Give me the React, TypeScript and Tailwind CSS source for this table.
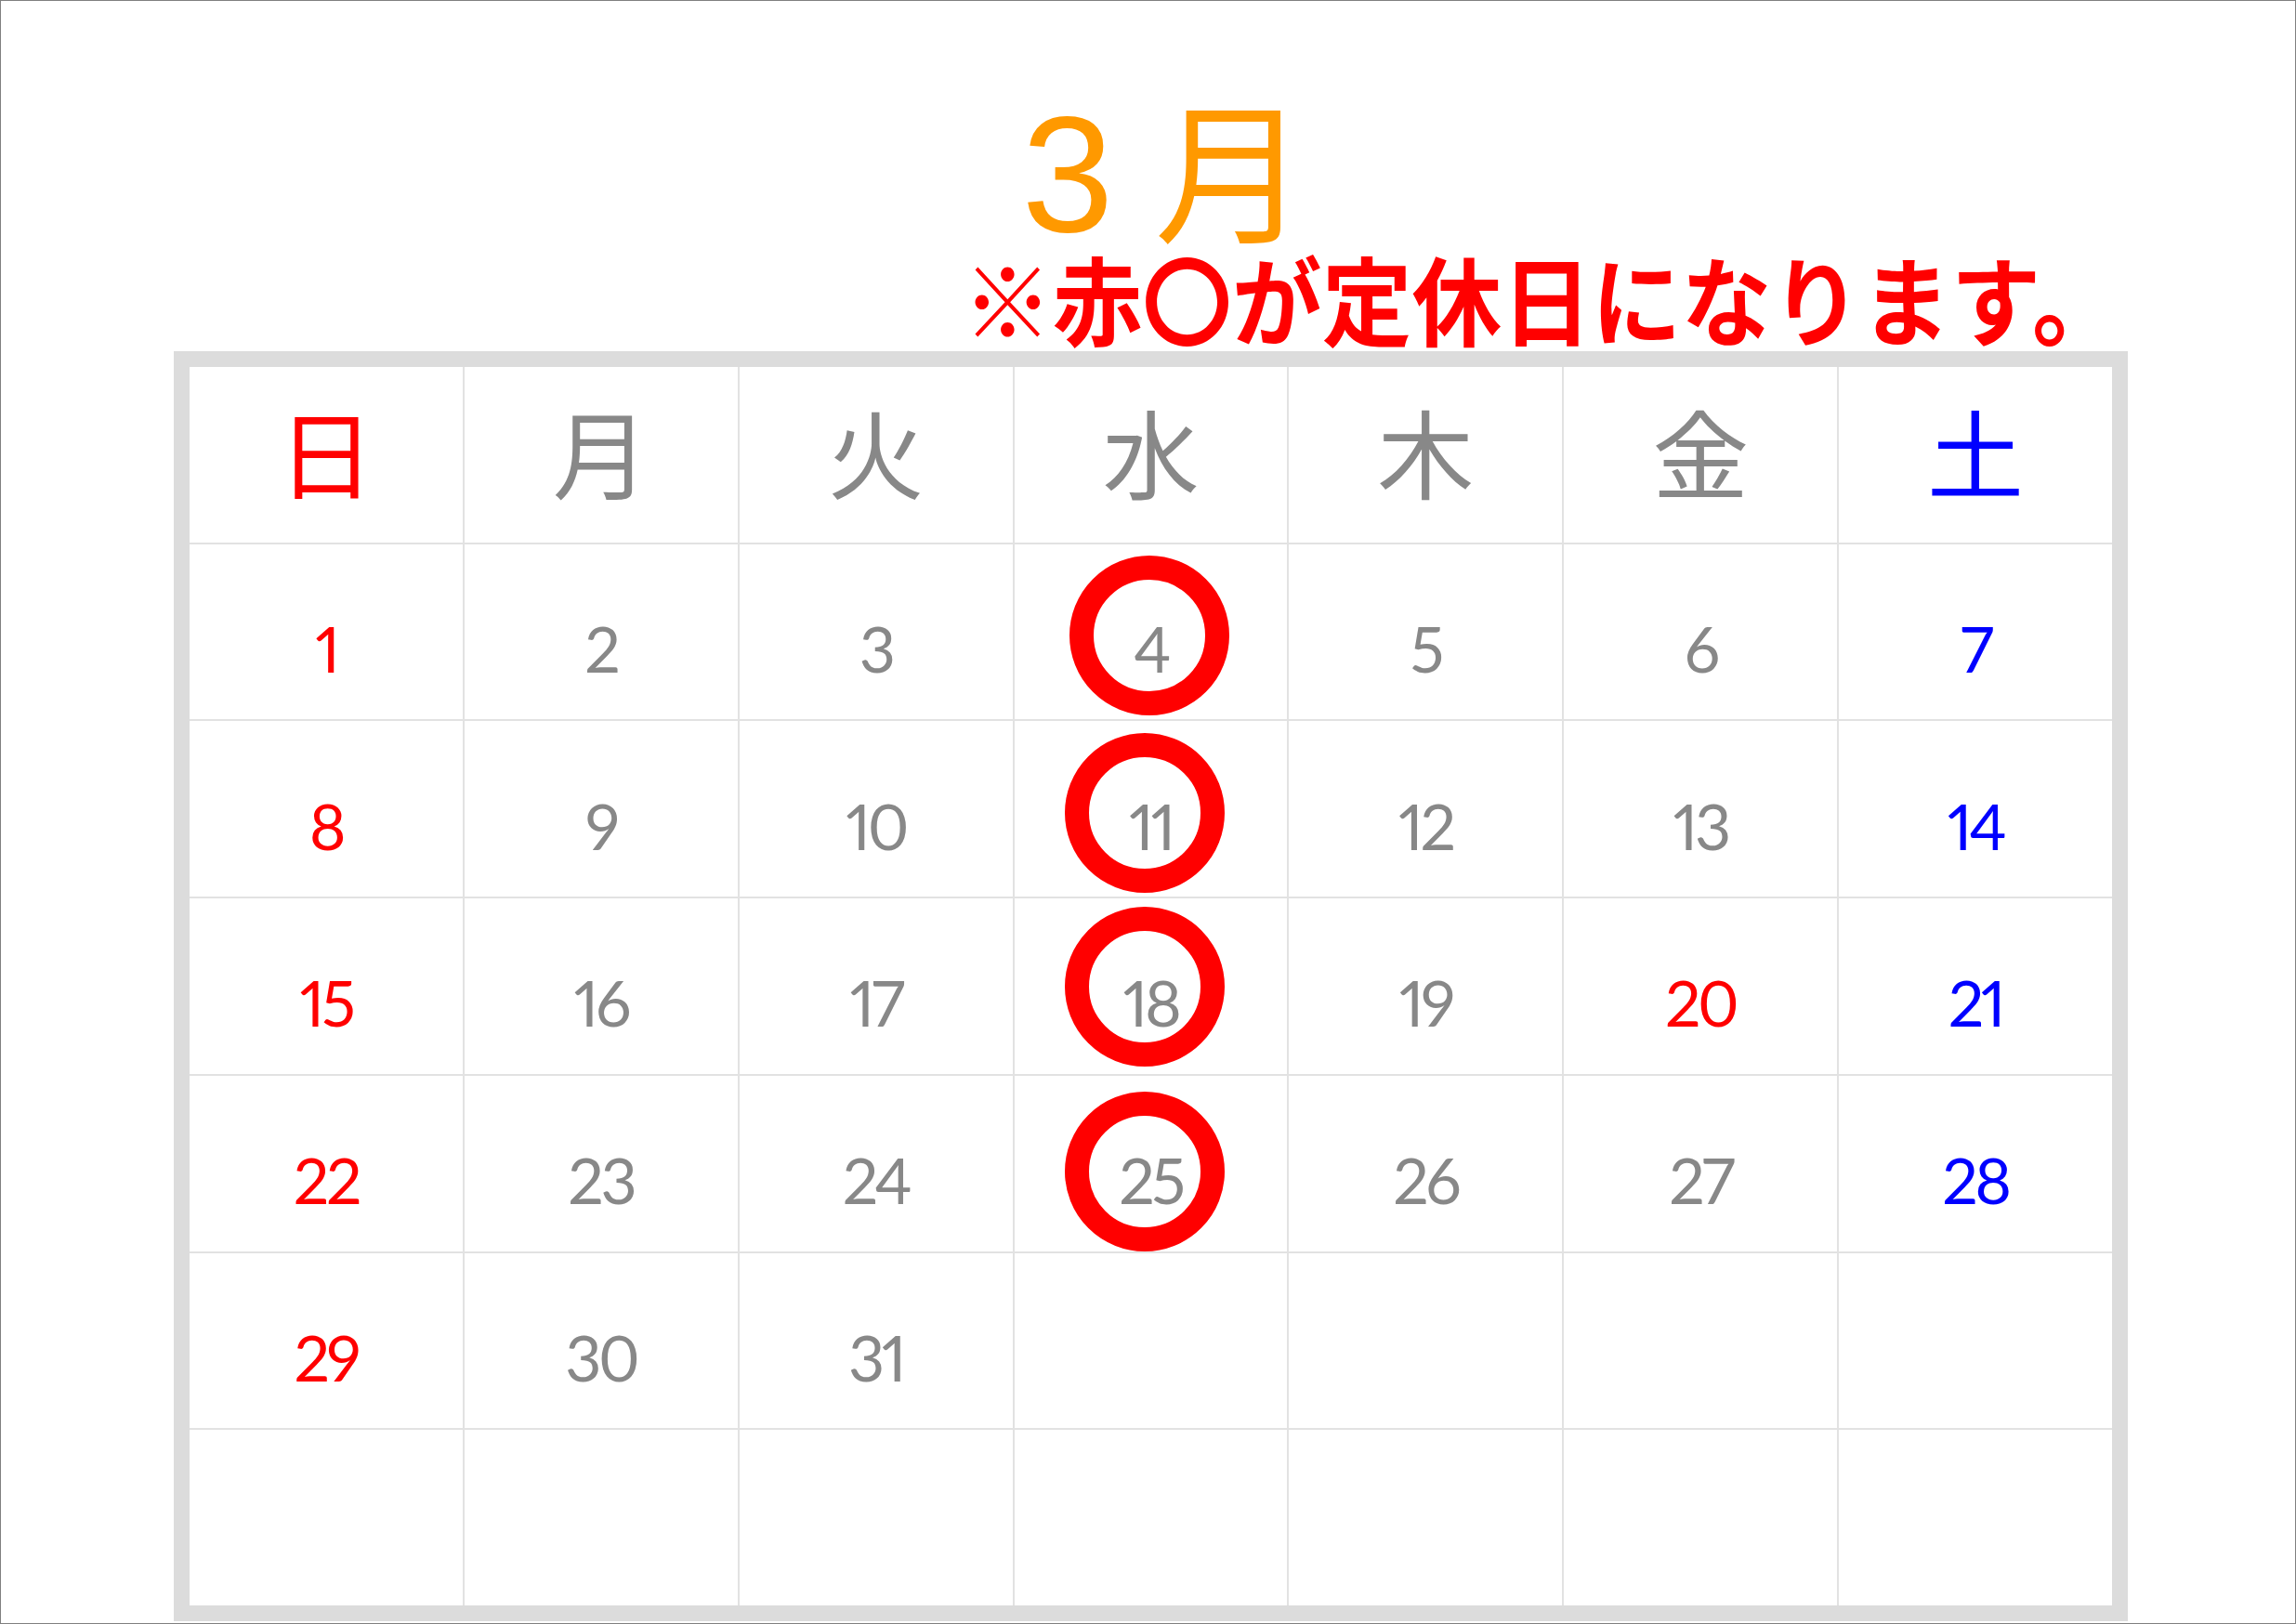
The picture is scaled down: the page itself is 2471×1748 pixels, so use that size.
import React from "react";

const dayNames = ["日", "月", "火", "水", "木", "金", "土"];

// 祝日 (春分の日)
const holidays = [20];

// 赤〇 = 定休日、少しずつずれて描かれている
const rings: Record<number, string> = {
  4: "left-[59px] top-[12px]",
  11: "left-[54px] top-[13px]",
  18: "left-[54px] top-[9px]",
  25: "left-[54px] top-[17px]",
};

const weeks: (number | null)[][] = [
  [1, 2, 3, 4, 5, 6, 7],
  [8, 9, 10, 11, 12, 13, 14],
  [15, 16, 17, 18, 19, 20, 21],
  [22, 23, 24, 25, 26, 27, 28],
  [29, 30, 31, null, null, null, null],
  [null, null, null, null, null, null, null],
];

const headColor = (i: number) => {
  if (i === 0) return "text-[#ff0000]";
  if (i === 6) return "text-[#0000ff]";
  return "text-[#888888]";
};

const numColor = (d: number, i: number) => {
  if (i === 0 || holidays.includes(d)) return "text-[#ff0000]";
  if (i === 6) return "text-[#0000ff]";
  return "text-[#888888]";
};

function DayCell({ day, col }: { day: number | null; col: number }) {
  return (
    <div className="relative bg-white flex items-center justify-center pt-[36px]">
      {day !== null && rings[day] && (
        <div
          className={`absolute ${rings[day]} w-[172px] h-[172px] rounded-full border-[26px] border-[#ff0000]`}
        />
      )}
      {day !== null && (
        <span
          className={`relative text-[68px] leading-none proportional-nums tracking-[-0.05em] ${numColor(day, col)}`}
          style={{ fontFamily: "Lato, 'Noto Sans', sans-serif" }}
        >
          {day}
        </span>
      )}
    </div>
  );
}

export default function App() {
  return (
    <div
      className="w-[2471px] h-[1748px] border border-[#808080] bg-white flex flex-col overflow-hidden"
      style={{ fontFamily: "'Noto Sans CJK JP', sans-serif" }}
    >
      <div className="ml-[186px] w-[2103px] flex flex-col">
        {/* タイトル */}
        <div className="mt-[94px] h-[165px] flex justify-center items-baseline pl-[30px] leading-none text-[#ff9900]">
          <span className="text-[178px] leading-none" style={{ fontFamily: "'Liberation Sans', Arial, sans-serif" }}>
            3
          </span>
          <span className="ml-[44px] text-[165px] leading-none">月</span>
        </div>

        <div className="h-[104px] flex justify-end pr-[6px]">
          <span className="mt-[8px] text-[104px] leading-none font-bold text-[#ff0000] whitespace-nowrap scale-x-[0.93] origin-right">
            ※赤〇が定休日になります。
          </span>
        </div>

        {/* カレンダー */}
        <div className="mt-[14px] h-[1367px] border-[17px] border-[#dcdcdc]">
          <div className="w-full h-full grid grid-cols-7 grid-rows-7 gap-[2px] bg-[#e2e2e2]">
            {dayNames.map((n, i) => (
              <div key={n} className="bg-white flex items-center justify-center pb-[8px]">
                <span className={`text-[104px] leading-none ${headColor(i)}`}>{n}</span>
              </div>
            ))}
            {weeks.map((w, r) =>
              w.map((d, c) => <DayCell key={`${r}-${c}`} day={d} col={c} />)
            )}
          </div>
        </div>
      </div>
    </div>
  );
}
